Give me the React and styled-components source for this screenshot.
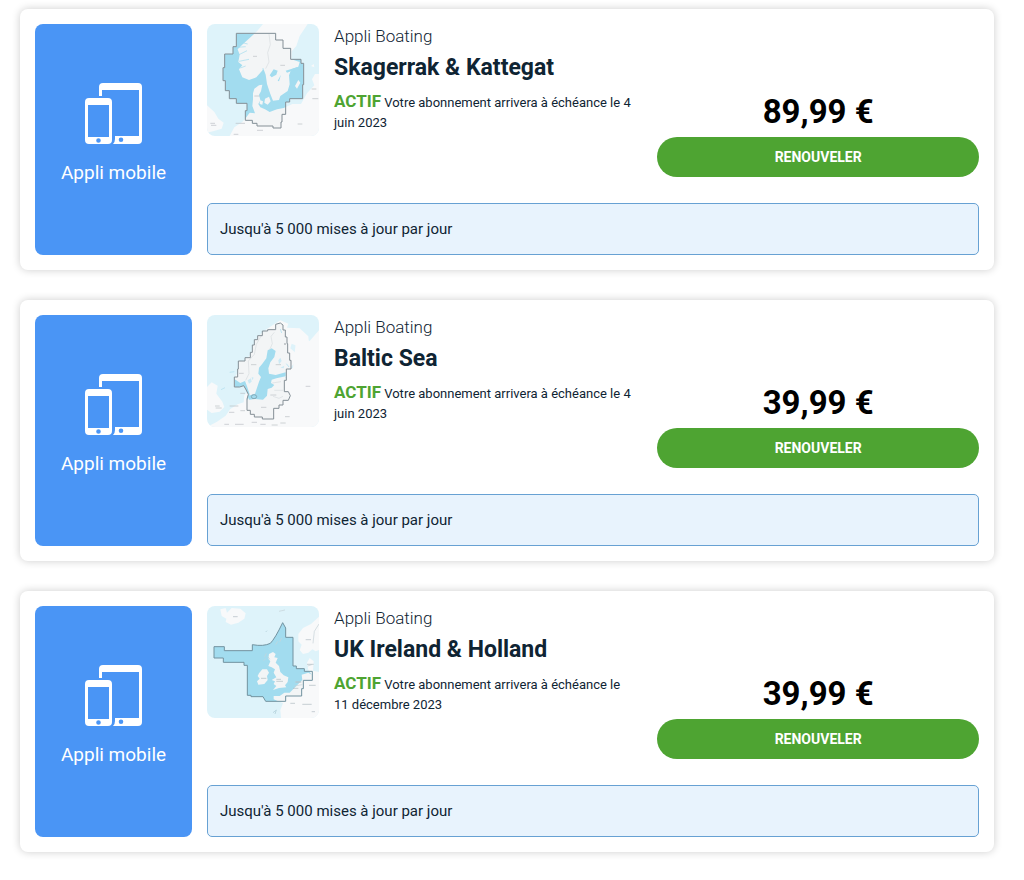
import styled, { createGlobalStyle } from "styled-components";


const subscriptions = [
  {
    id: "skagerrak",
    name: "Skagerrak & Kattegat",
    expiry: "4 juin 2023",
    price: "89,99 €",
    Map: SkagerrakMap,
  },
  {
    id: "baltic",
    name: "Baltic Sea",
    expiry: "4 juin 2023",
    price: "39,99 €",
    Map: BalticMap,
  },
  {
    id: "uk",
    name: "UK Ireland & Holland",
    expiry: "11 décembre 2023",
    price: "39,99 €",
    Map: UkMap,
  },
];

function App() {
  return (
    <>
      <GlobalStyle />
      <SubscriptionList>
        {subscriptions.map((item) => (
          <SubscriptionCard key={item.id} {...item} />
        ))}
      </SubscriptionList>
    </>
  );
}

function SubscriptionCard({ name, expiry, price, Map }) {
  return (
    <Card>
      <TypePanel>
        <DevicesIcon />
        <TypeLabel>Appli mobile</TypeLabel>
      </TypePanel>
      <Details>
        <Summary>
          <Product>
            <Map />
            <ProductText>
              <Category>Appli Boating</Category>
              <ProductName>{name}</ProductName>
              <Expiry>
                <Status>ACTIF</Status> Votre abonnement arrivera à échéance le {expiry}
              </Expiry>
            </ProductText>
          </Product>
          <Purchase>
            <Price>{price}</Price>
            <RenewButton type="button">RENOUVELER</RenewButton>
          </Purchase>
        </Summary>
        <Notice>Jusqu'à 5 000 mises à jour par jour</Notice>
      </Details>
    </Card>
  );
}

function DevicesIcon() {
  return (
    <svg width="58" height="62" viewBox="0 0 58 62" aria-hidden="true">
      <path
        fill="#fff"
        fillRule="evenodd"
        d="M14 13V4a4 4 0 0 1 4-4h35a4 4 0 0 1 4 4v53a4 4 0 0 1-4 4H28q2-2 2-5V53h24V7H17v6zM36 54.500a2.300 2.300 0 1 0 0 4.600a2.300 2.300 0 0 0 0-4.600z"
      />
      <path
        fill="#fff"
        fillRule="evenodd"
        d="M4 15h19a4 4 0 0 1 4 4v38a4 4 0 0 1-4 4H4a4 4 0 0 1-4-4V19a4 4 0 0 1 4-4zM3 22v32h21V22zM13.500 55.200a2.300 2.300 0 1 0 0 4.600a2.300 2.300 0 0 0 0-4.600z"
      />
    </svg>
  );
}

// Each map: pale sea, land, then the brighter covered area clipped to its outline
function SkagerrakMap() {
  const outline =
    "M110 52H228V72H250V97H273V130H304V142H312V206H309V248H270V258H258V295H247V318H244V336H220V330H172V322H158V313H137V284H142V262H110V248H89V224H77V194H70V155H75V114H100V92H110Z";
  const land = (
    <>
      <path d="M190 24H324L300 60L290 90L276 106L275 130L300 138L296 152L275 160L268 178L270 205L264 225L242 240L238 252L220 254L212 234L202 204L198 176L192 160L184 168L170 184L148 192L128 184L118 160L128 148L116 138L120 116L114 100L130 84L150 66L172 46Z" />
      <path d="M160 232L164 218L178 208L188 206L184 226L178 236L182 252L176 264L182 274L196 280L210 288L232 280L252 276L278 264L304 264L322 232L344 208L337 190L346 174H360V360H90L104 334L128 318L140 304L150 290L166 292L158 270L160 250Z" />
      <path d="M22 268L44 288L56 308L72 320L66 338L40 346L22 350Z" />
      <path d="M196 248L208 242L213 256L204 266L194 260ZM180 252L190 256L188 266L180 264ZM286 210L296 192L302 200L292 218ZM334 150L342 144L344 154Z" />
    </>
  );
  return (
    <MapImage viewBox="22 24 336 336" role="img" aria-label="Skagerrak & Kattegat">
      <defs>
        <clipPath id="skagerrak-area">
          <path d={outline} />
        </clipPath>
      </defs>
      <rect x="22" y="24" width="336" height="336" fill="#def3fa" />
      <g fill="#f8f9fa">{land}</g>
      <g clipPath="url(#skagerrak-area)">
        <rect x="22" y="24" width="336" height="336" fill="#a2dcef" />
        <g fill="#f3f5f6">{land}</g>
        <path fill="#a2dcef" d="M210 178L222 160L234 164L230 176L216 184ZM234 194L244 176L238 196ZM258 164L296 152L284 162L262 170Z" />
        <path fill="none" stroke="#a2dcef" strokeWidth="2" d="M114 94L138 92M118 116L142 104M118 136L148 130M122 156L138 150M190 174V156M128 80L144 84M226 276L210 284" />
      </g>
      <path d="M208 54L212 86L204 110L208 138L198 158" fill="none" stroke="#d8dcdf" strokeWidth="2" />
      <path d={outline} fill="none" stroke="#848f96" strokeWidth="3" />
      <path d="M160 121H172M242 148H256M164 240H180M108 322H136M172 343H190M294 324H308M336 219H350M338 248H356M32 322H46M34 328H50M102 355H116" stroke="#b9bec2" strokeWidth="2" />
    </MapImage>
  );
}

function BalticMap() {
  const outline =
    "M228 50L242 46L250 52V67H257V88H262V108H264V136H270V158H274V184H260V218H254V252H266L272 264L266 278H250V292H238V302H222V334H188V328H164V320H152V308H142V274L146 260L138 244L132 234L120 238H104V208H114V184H116V160H136V150H152V134H158V112H164V96H174V84H188V70H204V66H228Z";
  const land = (
    <>
      <path d="M106 208L116 192L120 170L138 158L154 138L160 114L172 92L190 72L216 54L242 38L266 48L262 60L300 62L326 86L328 108L300 118L276 108L272 122L288 136L290 160L272 180L256 194L232 202L216 198L204 182L210 170L222 150L226 132L216 124L206 132L200 154L184 170L178 184L184 204L180 222L178 250L168 260L158 276L148 264L142 238L130 220L114 232Z" />
      <path d="M290 90L330 100L358 68V358H22L52 342L78 324L92 304L114 290L132 284L134 262L144 254L146 272L142 292L162 298L184 278L204 266L208 246L226 238L222 216L246 206L262 188L280 180Z" />
      <path d="M36 224L54 234L50 258L68 282L74 298L60 312L36 316L22 306V238Z" />
      <path d="M194 238L202 228L200 242ZM212 222L222 214L220 226Z" />
    </>
  );
  return (
    <MapImage viewBox="22 22 336 336" role="img" aria-label="Baltic Sea">
      <defs>
        <clipPath id="baltic-area">
          <path d={outline} />
        </clipPath>
      </defs>
      <rect x="22" y="22" width="336" height="336" fill="#def3fa" />
      <g fill="#f8f9fa">{land}</g>
      <g clipPath="url(#baltic-area)">
        <rect x="22" y="22" width="336" height="336" fill="#f3f5f6" />
        <path
          fill="#a2dcef"
          d="M204 128L216 122L228 130L224 148L212 164L206 182L208 198L228 202L258 194V206L230 212L216 216L214 226L224 232L216 240L204 244L202 264L190 276L166 274L148 276L146 264L166 258L172 240L178 222L184 208L176 198L178 180L188 168L200 152ZM104 214L122 226L136 220L142 236L150 260L144 278L132 250L122 240H104Z"
        />
        <path fill="#cceaf5" d="M144 218L154 212L156 222L148 228ZM156 208L162 210L158 218ZM236 158L242 150L246 160L238 170ZM242 180L254 174L252 182ZM256 210L266 204V216Z" />
      </g>
      <path d="M224 74L214 86L218 108L210 126M186 82L170 110L164 140L146 160L148 198L138 218M218 226L244 222M224 248H250M220 266L238 272L250 266" fill="none" stroke="#d8dcdf" strokeWidth="2" />
      <path d="M242 64L246 76M260 168L268 178M64 246L76 240M90 194L104 192" fill="none" stroke="#bfe5f2" strokeWidth="3" />
      <path d={outline} fill="none" stroke="#848f96" strokeWidth="3" />
      <ellipse cx="163" cy="267" rx="8" ry="6" fill="#a2dcef" stroke="#758f9b" strokeWidth="2" />
      <path d="M154 171H170M228 171H244M118 197H132M318 236H332M122 257H136M212 262H230M184 299H200M90 295H116M88 314H104M122 309H136M46 295H60M48 301H66M256 327H270M74 350H88M106 350H132M156 344H172M182 350H198M216 352H234M242 346H258" stroke="#b9bec2" strokeWidth="2" />
      <circle cx="256" cy="109" r="2" fill="#747f86" />
    </MapImage>
  );
}

function UkMap() {
  const outline =
    "M43 148H74V160H158V142Q192 148 212 138Q226 124 249 76L258 92V120H280V206H290V214H314V222H338V249H311V274H306V296H258V312H198L190 298H154V294H143V204H133V195H71V182H43Z";
  const land = (
    <>
      <path d="M208 170L220 164L228 170L224 180L234 182L228 196L238 206L242 224L252 234L266 240L264 254L256 264L260 270L238 272L220 278L230 266L222 260L226 252L216 248L230 240L222 226L226 216L216 210L206 206L212 192L206 184Z" />
      <path d="M178 228L188 216L202 216L208 226L202 236L204 248L194 260L176 262L172 252L180 244L174 236Z" />
      <path d="M222 296L240 296L254 286L270 286L284 272L298 258L308 248L306 232L326 226L336 232L326 218L322 196L330 182L342 192L340 220L358 224V362H244L242 338L250 318L222 306Z" />
      <path d="M358 58L334 80L310 92L296 110L296 132L306 142L300 158L310 170L326 166L338 156L348 162L358 158Z" />
      <path d="M62 36L78 32L82 46L96 32L122 34L138 48L134 64L116 76L94 82L78 74L80 64L66 56Z" />
    </>
  );
  return (
    <MapImage viewBox="22 26 336 336" role="img" aria-label="UK Ireland & Holland">
      <defs>
        <clipPath id="uk-area">
          <path d={outline} />
        </clipPath>
      </defs>
      <rect x="22" y="26" width="336" height="336" fill="#def3fa" />
      <g fill="#f8f9fa">{land}</g>
      <g clipPath="url(#uk-area)">
        <rect x="22" y="26" width="336" height="336" fill="#a2dcef" />
        <g fill="#f3f5f6">{land}</g>
      </g>
      <path d="M194 180L200 168M192 190L198 184M204 178L210 186M228 142L234 132M240 134L246 122M198 104L202 100M220 346L230 338L226 350" fill="none" stroke="#bbd7e0" strokeWidth="3" />
      <path d="M238 42L256 38M284 266L308 262M286 254H306M324 206L336 202M358 80L344 102L340 138" fill="none" stroke="#c4d0d6" strokeWidth="2" />
      <path d={outline} fill="none" stroke="#72929f" strokeWidth="3" />
      <path d="M100 58H114M318 127H334M322 201H342M184 243H200M230 246H244M230 252H250M288 254H304M280 273H296M328 264H348M272 318H286M308 321H336M336 343H346" stroke="#aeb9bf" strokeWidth="2" />
    </MapImage>
  );
}


const GlobalStyle = createGlobalStyle`
  * {
    box-sizing: border-box;
  }

  body {
    margin: 0;
    background: #fff;
    color: #0f2433;
    font-family: Roboto, "Liberation Sans", sans-serif;
  }
`;

const SubscriptionList = styled.main`
  display: flex;
  flex-direction: column;
  gap: 30px;
  padding: 9px 30px 28px 20px;
`;

const Card = styled.article`
  display: grid;
  grid-template-columns: 157px minmax(0, 1fr);
  gap: 15px;
  padding: 15px;
  border-radius: 8px;
  background: #fff;
  box-shadow: 0 0 8px rgba(0, 0, 0, 0.2);
`;

const TypePanel = styled.div`
  display: flex;
  flex-direction: column;
  align-items: center;
  justify-content: center;
  gap: 14px;
  padding-bottom: 10px;
  border-radius: 8px;
  background: #4a95f5;
  color: #fff;
`;

const TypeLabel = styled.span`
  font-size: 19px;
  line-height: 28px;
`;

const Details = styled.div`
  display: flex;
  flex-direction: column;
  gap: 26px;
`;

const Summary = styled.div`
  display: grid;
  grid-template-columns: 7fr 5fr;
  min-height: 153px;
`;

const Product = styled.div`
  display: flex;
  align-items: flex-start;
  gap: 15px;
  padding-right: 20px;
`;

const MapImage = styled.svg`
  flex: none;
  width: 112px;
  height: 112px;
  border-radius: 8px;
`;

const ProductText = styled.div`
  min-width: 0;
`;

const Category = styled.p`
  margin: 0;
  font-size: 17px;
  font-weight: 300;
  line-height: 24px;
`;

const ProductName = styled.h2`
  margin: 4px 0 7px;
  font-size: 23px;
  font-weight: 700;
  line-height: 32px;
`;

const Expiry = styled.p`
  margin: 0;
  font-size: 13px;
  line-height: 20px;
`;

const Status = styled.strong`
  color: #4ea432;
  font-size: 17px;
  font-weight: 700;
`;

const Purchase = styled.div`
  display: flex;
  flex-direction: column;
  justify-content: flex-end;
`;

const Price = styled.p`
  margin: 0 0 5px;
  color: #000;
  font-size: 33px;
  font-weight: 700;
  line-height: 40px;
  text-align: center;
`;

const RenewButton = styled.button`
  height: 40px;
  border: 0;
  border-radius: 20px;
  background: #4ea432;
  color: #fff;
  font-family: inherit;
  font-size: 14px;
  font-weight: 700;
  cursor: pointer;
`;

const Notice = styled.p`
  margin: 0;
  padding: 13px 12px;
  border: 1px solid #67a1d3;
  border-radius: 5px;
  background: #e8f3fd;
  font-size: 15px;
  line-height: 24px;
`;


export default App;
